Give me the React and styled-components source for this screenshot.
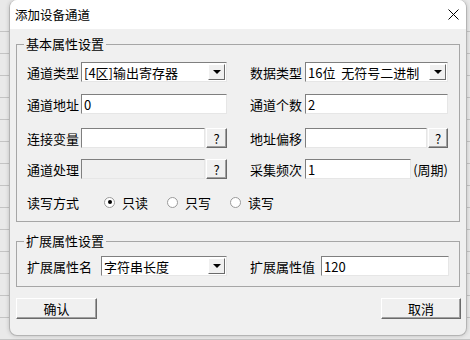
import React from 'react'
import styled, { createGlobalStyle } from 'styled-components'

const GlobalStyle = createGlobalStyle`
  html, body {
    margin: 0;
    padding: 0;
  }
  body {
    width: 470px;
    height: 340px;
    overflow: hidden;
    background-color: #e9e9e9;
    background-image: repeating-linear-gradient(
      to bottom,
      transparent 0px,
      transparent 21px,
      #c4c4c4 21px,
      #c4c4c4 22px
    );
    background-position: 0 10px;
    font-family: "Noto Sans CJK SC", "Liberation Sans", sans-serif;
    font-size: 13px;
    color: #000;
  }
`

const Desktop = styled.div`
  box-sizing: border-box;
  width: 470px;
  height: 340px;
  padding-left: 9px;
`

const Window = styled.div`
  box-sizing: border-box;
  width: 458px;
  height: 336px;
  border: 1px solid #b4b4b4;
  border-top: none;
  border-radius: 8px;
  background: #f0f0f0;
  overflow: hidden;
  display: flex;
  flex-direction: column;
  box-shadow: 0 0 4px rgba(0, 0, 0, 0.18);
`

const TitleBar = styled.div`
  height: 29px;
  flex: none;
  background: #fff;
  display: flex;
  align-items: center;
  justify-content: space-between;
  padding: 0 7px 0 5px;
  font-size: 12.5px;
`

const CloseIcon = styled.svg`
  width: 11px;
  height: 11px;
  display: block;
`

const Body = styled.div`
  flex: 1;
  padding: 15px 5px 0 6px;
  display: flex;
  flex-direction: column;
`

const Group = styled.div`
  position: relative;
  box-sizing: border-box;
  width: 444px;
  border: 1px solid #a6a6a6;
  padding: ${p => p.$pad};
  margin-bottom: ${p => p.$mb || 0}px;
  display: flex;
  flex-direction: column;
`

const GroupTitle = styled.span`
  position: absolute;
  top: -9px;
  left: 7px;
  padding: 0 2px;
  background: #f0f0f0;
  line-height: 16px;
`

const Row = styled.div`
  display: flex;
  align-items: center;
  gap: 23px;
  height: 20px;
  margin-top: ${p => p.$mt || 0}px;
`

const Cell = styled.div`
  display: flex;
  align-items: center;
  width: ${p => p.$w}px;
  height: 20px;
`

const Label = styled.span`
  flex: none;
  width: ${p => p.$w}px;
  white-space: nowrap;
`

const Field = styled.div`
  box-sizing: border-box;
  flex: 1;
  height: 20px;
  border: 1px solid;
  border-color: #7f7f7f #e6e6e6 #e6e6e6 #7f7f7f;
  background: ${p => (p.$disabled ? '#f0f0f0' : '#fff')};
  display: flex;
  align-items: center;
  padding-left: 2px;
  white-space: nowrap;
  overflow: hidden;
`

const FieldText = styled.span`
  flex: 1;
  white-space: pre;
`

const DropButton = styled.div`
  box-sizing: border-box;
  width: 17px;
  height: 16px;
  margin-right: 1px;
  background: #f0f0f0;
  border: 1px solid;
  border-color: #fff #6a6a6a #6a6a6a #fff;
  display: flex;
  align-items: center;
  justify-content: center;
`

const Arrow = styled.div`
  width: 0;
  height: 0;
  border-left: 4px solid transparent;
  border-right: 4px solid transparent;
  border-top: 4px solid #000;
`

const Raised = styled.div`
  box-sizing: border-box;
  flex: none;
  width: ${p => p.$w}px;
  height: ${p => p.$h || 20}px;
  margin-left: ${p => p.$ml || 0}px;
  background: #f0f0f0;
  border: 1px solid;
  border-color: #fff #6a6a6a #6a6a6a #fff;
  box-shadow: inset -1px -1px 0 #a0a0a0;
  display: flex;
  align-items: center;
  justify-content: center;
`

const Suffix = styled.span`
  margin-left: 2px;
  white-space: nowrap;
`

const RadioGroup = styled.div`
  display: flex;
  align-items: center;
`

const RadioOption = styled.div`
  width: 63px;
  display: flex;
  align-items: center;
  gap: 7px;
`

const RadioDot = styled.span`
  box-sizing: border-box;
  width: 11px;
  height: 11px;
  border-radius: 50%;
  border: 1px solid #9a9a9a;
  background: #fff;
  display: flex;
  align-items: center;
  justify-content: center;
  &::after {
    content: '';
    width: 4px;
    height: 4px;
    border-radius: 50%;
    background: ${p => (p.$checked ? '#000' : 'transparent')};
  }
`

const Footer = styled.div`
  display: flex;
  justify-content: space-between;
  margin-top: 11px;
`

const Select = ({ value }) => (
  <Field>
    <FieldText>{value}</FieldText>
    <DropButton>
      <Arrow />
    </DropButton>
  </Field>
)

const Radio = ({ label, checked }) => (
  <RadioOption>
    <RadioDot $checked={checked} />
    <span>{label}</span>
  </RadioOption>
)

const App = () => {
  return (
    <Desktop>
      <GlobalStyle />
      <Window>
        <TitleBar>
          <span>添加设备通道</span>
          <CloseIcon viewBox="0 0 11 11">
            <path d="M0.5 0.5 L10.5 10.5 M10.5 0.5 L0.5 10.5" stroke="#000" strokeWidth="1" fill="none" />
          </CloseIcon>
        </TitleBar>
        <Body>
          <Group $pad="17px 10px 9px 10px" $mb={19}>
            <GroupTitle>基本属性设置</GroupTitle>
            <Row>
              <Cell $w={200}>
                <Label $w={54}>通道类型</Label>
                <Select value="[4区]输出寄存器" />
              </Cell>
              <Cell $w={198}>
                <Label $w={55}>数据类型</Label>
                <Select value="16位  无符号二进制" />
              </Cell>
            </Row>
            <Row $mt={12}>
              <Cell $w={200}>
                <Label $w={54}>通道地址</Label>
                <Field><FieldText>0</FieldText></Field>
              </Cell>
              <Cell $w={198}>
                <Label $w={55}>通道个数</Label>
                <Field><FieldText>2</FieldText></Field>
              </Cell>
            </Row>
            <Row $mt={14}>
              <Cell $w={200}>
                <Label $w={54}>连接变量</Label>
                <Field />
                <Raised $w={21} $ml={1}>?</Raised>
              </Cell>
              <Cell $w={198}>
                <Label $w={55}>地址偏移</Label>
                <Field />
                <Raised $w={20} $ml={1}>?</Raised>
              </Cell>
            </Row>
            <Row $mt={11}>
              <Cell $w={200}>
                <Label $w={54}>通道处理</Label>
                <Field $disabled />
                <Raised $w={21} $ml={1}>?</Raised>
              </Cell>
              <Cell $w={198}>
                <Label $w={55}>采集频次</Label>
                <Field><FieldText>1</FieldText></Field>
                <Suffix>(周期)</Suffix>
              </Cell>
            </Row>
            <Row $mt={13}>
              <Label $w={54}>读写方式</Label>
              <RadioGroup>
                <Radio label="只读" checked />
                <Radio label="只写" />
                <Radio label="读写" />
              </RadioGroup>
            </Row>
          </Group>
          <Group $pad="14px 10px 10px 10px">
            <GroupTitle>扩展属性设置</GroupTitle>
            <Row>
              <Cell $w={200}>
                <Label $w={74}>扩展属性名</Label>
                <Select value="字符串长度" />
              </Cell>
              <Cell $w={199}>
                <Label $w={71}>扩展属性值</Label>
                <Field><FieldText>120</FieldText></Field>
              </Cell>
            </Row>
          </Group>
          <Footer>
            <Raised $w={81} $h={21}>确认</Raised>
            <Raised $w={80} $h={21}>取消</Raised>
          </Footer>
        </Body>
      </Window>
    </Desktop>
  )
}

export default App
